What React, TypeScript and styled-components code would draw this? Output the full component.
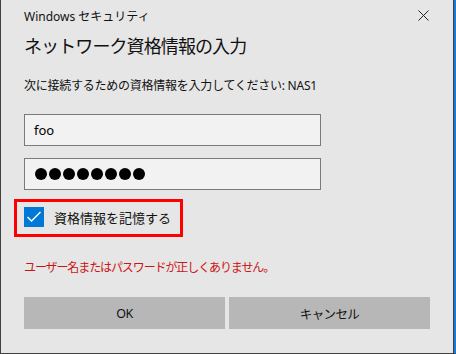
import React from "react";
import styled, { createGlobalStyle } from "styled-components";

const GlobalStyle = createGlobalStyle`
    html, body {
        margin: 0;
        padding: 0;
        background: #e6e6e6;
    }
    * {
        box-sizing: border-box;
    }
`;

const Dialog = styled.div`
    width: 456px;
    height: 354px;
    background-color: #e6e6e6;
    border-left: 1px solid #404040;
    border-bottom: 1px solid #404040;
    border-right: 2px solid #1979d6;
    box-shadow: inset -1px 0 0 #404040;
    padding: 0 24px 0 23px;
    font-family: "Noto Sans", "Noto Sans CJK JP", sans-serif;
    color: #000;
    display: flex;
    flex-direction: column;
`;

const TitleBar = styled.div`
    height: 32px;
    display: flex;
    align-items: center;
    justify-content: space-between;
    font-size: 12px;
    color: #111;
`;

const CloseButton = styled.button`
    width: 24px;
    height: 24px;
    margin-right: -5px;
    margin-top: -1px;
    border: none;
    background: transparent;
    padding: 0;
    display: flex;
    align-items: center;
    justify-content: center;
`;

const Heading = styled.h1`
    margin: 1px 0 0;
    font-size: 18px;
    font-weight: 400;
    line-height: 26px;
    letter-spacing: -0.9px;
    color: #111;
`;

const Prompt = styled.p`
    margin: 19px 0 0;
    font-size: 12px;
    line-height: 16px;
    letter-spacing: -0.25px;
    color: #111;
`;

const Field = styled.div<{ $top: number }>`
    margin-top: ${(p) => p.$top}px;
    width: 297px;
    height: 32px;
    border: 1px solid #7a7a7a;
    background: #f2f2f2;
    display: flex;
    align-items: center;
    padding-left: 9px;
    font-size: 13px;
`;

const Dots = styled.div`
    display: flex;
    gap: 2px;
    padding-left: 1px;
`;

const Dot = styled.span`
    width: 12px;
    height: 12px;
    border-radius: 50%;
    background: #000;
`;

const RememberRow = styled.label`
    position: relative;
    margin-top: 17px;
    height: 20px;
    display: flex;
    align-items: center;
    gap: 10px;
    font-size: 13px;
    color: #111;

    &::after {
        content: "";
        position: absolute;
        left: -10px;
        top: -8px;
        width: 169px;
        height: 38px;
        border: 3px solid #ff0000;
        box-sizing: border-box;
    }
`;

const CheckBox = styled.span`
    width: 20px;
    height: 20px;
    background: #0078d7;
    display: flex;
    align-items: center;
    justify-content: center;
`;

const ErrorText = styled.p`
    margin: 33px 0 0;
    font-size: 12px;
    line-height: 16px;
    letter-spacing: -1.1px;
    color: #cc1414;
`;

const ButtonRow = styled.div`
    margin-top: 21px;
    display: grid;
    grid-template-columns: 1fr 1fr;
    gap: 4px;
`;

const Button = styled.button`
    height: 32px;
    border: none;
    background: #b7b7b7;
    font-family: "Noto Sans", "Noto Sans CJK JP", sans-serif;
    font-size: 12.5px;
    letter-spacing: -0.6px;
    color: #111;
    padding: 0;
`;

const App = () => {
    return (
        <>
            <GlobalStyle />
            <Dialog>
                <TitleBar>
                    <span>Windows セキュリティ</span>
                    <CloseButton aria-label="閉じる">
                        <svg width="11" height="11" viewBox="0 0 11 11">
                            <path d="M0.5 0.5 L10.5 10.5 M10.5 0.5 L0.5 10.5" stroke="#222" strokeWidth="1" />
                        </svg>
                    </CloseButton>
                </TitleBar>
                <Heading>ネットワーク資格情報の入力</Heading>
                <Prompt>次に接続するための資格情報を入力してください: NAS1</Prompt>
                <Field $top={20}>foo</Field>
                <Field $top={12}>
                    <Dots>
                        {Array.from({ length: 8 }).map((_, i) => (
                            <Dot key={i} />
                        ))}
                    </Dots>
                </Field>
                <RememberRow>
                    <CheckBox>
                        <svg width="16" height="12" viewBox="0 0 16 12">
                            <path d="M1.5 6 L5.5 10 L14.5 1" stroke="#fff" strokeWidth="1.4" fill="none" />
                        </svg>
                    </CheckBox>
                    資格情報を記憶する
                </RememberRow>
                <ErrorText>ユーザー名またはパスワードが正しくありません。</ErrorText>
                <ButtonRow>
                    <Button>OK</Button>
                    <Button>キャンセル</Button>
                </ButtonRow>
            </Dialog>
        </>
    );
};

export default App;
